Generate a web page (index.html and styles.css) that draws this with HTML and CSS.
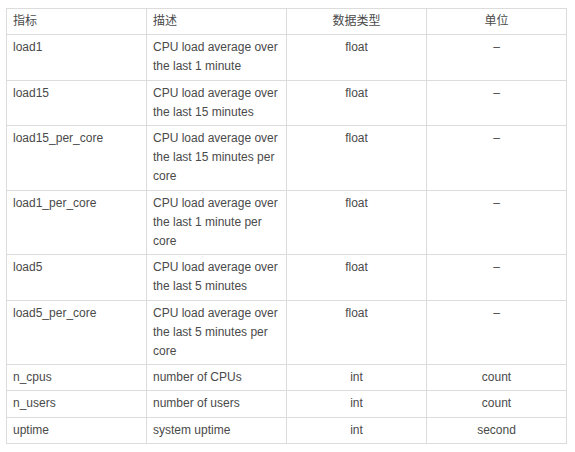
FILE: index.html
```html
<!DOCTYPE html>
<html lang="zh">
<head>
<meta charset="utf-8">
<link rel="stylesheet" href="styles.css">
</head>
<body>
<table class="metrics">
  <thead>
    <tr><th>指标</th><th>描述</th><th class="c">数据类型</th><th class="c">单位</th></tr>
  </thead>
  <tbody>
    <tr><td>load1</td><td>CPU load average over the last 1 minute</td><td class="c">float</td><td class="c">–</td></tr>
    <tr><td>load15</td><td>CPU load average over the last 15 minutes</td><td class="c">float</td><td class="c">–</td></tr>
    <tr><td>load15_per_core</td><td>CPU load average over the last 15 minutes per core</td><td class="c">float</td><td class="c">–</td></tr>
    <tr><td>load1_per_core</td><td>CPU load average over the last 1 minute per core</td><td class="c">float</td><td class="c">–</td></tr>
    <tr><td>load5</td><td>CPU load average over the last 5 minutes</td><td class="c">float</td><td class="c">–</td></tr>
    <tr><td>load5_per_core</td><td>CPU load average over the last 5 minutes per core</td><td class="c">float</td><td class="c">–</td></tr>
    <tr><td>n_cpus</td><td>number of CPUs</td><td class="c">int</td><td class="c">count</td></tr>
    <tr><td>n_users</td><td>number of users</td><td class="c">int</td><td class="c">count</td></tr>
    <tr><td>uptime</td><td>system uptime</td><td class="c">int</td><td class="c">second</td></tr>
  </tbody>
</table>
</body>
</html>
```
FILE: styles.css
```css
html, body {
  margin: 0;
  padding: 0;
  background: #fff;
}
body {
  padding: 8px 8px 0 6px;
  font-family: "Liberation Sans", "Noto Sans CJK SC", Arial, sans-serif;
  font-size: 12px;
  color: #4a4a4a;
}
.metrics {
  width: 561px;
  border-collapse: collapse;
  table-layout: fixed;
}
.metrics th,
.metrics td {
  border: 1px solid #dcdcdc;
  padding: 3px 6px 3px 6px;
  line-height: 19.2px;
  vertical-align: top;
  text-align: left;
  font-weight: normal;
}
.metrics .c {
  text-align: center;
}
```
